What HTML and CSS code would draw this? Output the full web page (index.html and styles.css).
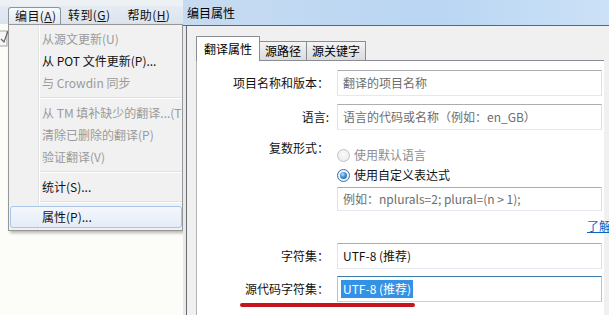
FILE: index.html
```html
<!DOCTYPE html>
<html lang="zh-CN">
<head>
<meta charset="utf-8">
<title>编目属性</title>
<link rel="stylesheet" href="styles.css">
</head>
<body>
<div class="screen">
  <div class="app">
    <div class="topstrip"></div>
    <div class="menubar">
      <span class="mb-item open">编目(<u>A</u>)</span>
      <span class="mb-item">转到(<u>G</u>)</span>
      <span class="mb-item">帮助(<u>H</u>)</span>
    </div>
    <div class="app-body">
      <div class="edge">
        <svg width="8" height="24" viewBox="0 0 8 24"><rect x="-6" y="6" width="13" height="15" fill="#f6f6f6" stroke="#a5a5a5"/><path d="M1 14 L4 17 L8 6" fill="none" stroke="#666" stroke-width="1.2"/></svg>
      </div>
      <div class="dropdown">
        <div class="mi dis">从源文更新(U)</div>
        <div class="mi">从 POT 文件更新(P)...</div>
        <div class="mi dis">与 Crowdin 同步</div>
        <div class="sep"></div>
        <div class="mi dis">从 TM 填补缺少的翻译...(T)</div>
        <div class="mi dis">清除已删除的翻译(P)</div>
        <div class="mi dis">验证翻译(V)</div>
        <div class="sep"></div>
        <div class="mi">统计(S)...</div>
        <div class="sep"></div>
        <div class="mi hot">属性(P)...</div>
      </div>
    </div>
  </div>
  <div class="dialog">
    <div class="titlebar">编目属性</div>
    <div class="dlg-body">
      <div class="tabs">
        <div class="tab active">翻译属性</div>
        <div class="tab">源路径</div>
        <div class="tab">源关键字</div>
      </div>
      <div class="panel">
        <div class="row">
          <span class="lbl">项目名称和版本：</span>
          <div class="field"><span class="ph">翻译的项目名称</span></div>
        </div>
        <div class="row gap8">
          <span class="lbl">语言:</span>
          <div class="field"><span class="ph">语言的代码或名称（例如：en_GB）</span></div>
        </div>
        <div class="row plural">
          <span class="lbl">复数形式：</span>
          <div class="opts">
            <div class="opt dis"><span class="radio"></span>使用默认语言</div>
            <div class="opt"><span class="radio on"><span class="dot"></span></span>使用自定义表达式</div>
            <div class="field sm"><span class="ph">例如：nplurals=2; plural=(n &gt; 1);</span></div>
          </div>
        </div>
        <div class="linkrow"><a class="link" href="#">了解更多</a></div>
        <div class="row gap9">
          <span class="lbl">字符集：</span>
          <div class="field sel-field">UTF-8 (推荐)</div>
        </div>
        <div class="row gap7">
          <span class="lbl">源代码字符集：</span>
          <div class="field sel-field focus"><span class="sel">UTF-8 (推荐)</span></div>
        </div>
        <div class="redline"></div>
      </div>
    </div>
  </div>
</div>
</body>
</html>
```

FILE: styles.css
```css
* { box-sizing: border-box; margin: 0; padding: 0; }
html, body { width: 609px; height: 315px; overflow: hidden; }
body {
  font-family: "Noto Sans CJK SC", "Noto Sans", sans-serif;
  font-size: 12px;
  line-height: 16px;
  color: #000;
  background: #fff;
}
.screen { display: flex; width: 609px; height: 315px; overflow: hidden; }

/* ---------- left application window with open menu ---------- */
.app { width: 183px; flex: none; display: flex; flex-direction: column; background: #fcfcf8; }
.topstrip { height: 6px; background: #eef1f4; }
.menubar {
  height: 18px;
  display: flex;
  align-items: flex-end;
  padding-left: 8px;
  background: linear-gradient(#e5ebf3, #dbe4ee);
}
.mb-item {
  height: 17px;
  line-height: 16px;
  padding: 0 10px 0 7px;
  white-space: nowrap;
  color: #111;
  letter-spacing: 0.4px;
}
.mb-item u { text-decoration: underline; text-underline-offset: 1px; }
.mb-item.open {
  width: 53px;
  padding: 0 0 0 6px;
  border: 1px solid #8d959e;
  border-bottom: none;
  border-radius: 3px 3px 0 0;
  background: linear-gradient(#f7f9fb, #e3e8ee);
}
.app-body { flex: 1; display: flex; align-items: flex-start; }
.edge { width: 8px; flex: none; padding-top: 1px; overflow: hidden; }
.edge svg { display: block; }
.dropdown {
  width: 175px;
  flex: none;
  border: 1px solid #979797;
  padding: 3px 0 2px;
  overflow: hidden;
  background: linear-gradient(to right, #f1f1f1 0, #f1f1f1 29px, #e2e3e3 29px, #e2e3e3 30px, #fff 30px, #fff 31px, #f1f1f1 31px);
  box-shadow: 2px 2px 3px rgba(0, 0, 0, 0.28);
}
.mi {
  height: 22px;
  line-height: 22px;
  padding-left: 33px;
  white-space: nowrap;
  color: #111;
}
.mi.dis { color: #9a9a9a; }
.mi.hot {
  margin-left: 1px;
  padding-left: 31px;
  line-height: 20px;
  border: 1px solid #a9c6ea;
  border-radius: 3px;
  background: linear-gradient(#f4f7fc, #e4ecf8);
}
.sep {
  height: 1px;
  margin: 3px 0 4px 31px;
  background: #e0e0e0;
  box-shadow: 0 1px 0 #fff;
}

/* ---------- dialog ---------- */
.dialog { flex: 1; min-width: 0; display: flex; flex-direction: column; background: #e5eaf0; }
.titlebar {
  height: 26px;
  line-height: 25px;
  padding-left: 4px;
  border-bottom: 1px solid #4f6a86;
  background: linear-gradient(to right, #c6dbf1, #bad6f3 60%, #cbe1f7);
  color: #000;
  white-space: nowrap;
}
.dlg-body {
  flex: 1;
  margin-left: 3px;
  border-left: 1px solid #6b6b6b;
  background: #f0f0f0;
  padding: 10px 5px 0 9px;
  display: flex;
  flex-direction: column;
  min-height: 0;
}
.tabs { height: 24px; flex: none; display: flex; align-items: flex-end; }
.tab {
  height: 19px;
  line-height: 18px;
  padding: 0 5px;
  border: 1px solid #898c95;
  border-left: none;
  border-bottom: none;
  background: linear-gradient(#f4f4f4, #e6e6e6 50%, #dcdcdc);
  white-space: nowrap;
}
.tab.active {
  height: 25px;
  line-height: 24px;
  margin-bottom: -1px;
  padding: 0 7px;
  border-left: 1px solid #898c95;
  background: #fff;
  position: relative;
  z-index: 1;
}
.panel {
  flex: 1;
  background: #fff;
  border-top: 1px solid #898c95;
  border-left: 1px solid #b4b4b4;
  padding: 9px 2px 0 0;
  display: flex;
  flex-direction: column;
}
.row { display: flex; align-items: center; gap: 8px; }
.row.gap8 { margin-top: 8px; }
.row.gap9 { margin-top: 9px; }
.row.gap7 { margin-top: 7px; }
.lbl { width: 132px; flex: none; text-align: right; white-space: nowrap; color: #111; }
.field {
  flex: 1;
  height: 26px;
  display: flex;
  align-items: center;
  padding-left: 5px;
  border: 1px solid;
  border-color: #abadb3 #dbdfe6 #e3e9ef #e2e3ea;
  background: #fff;
  white-space: nowrap;
  overflow: hidden;
  color: #111;
}
.ph { color: #6d6d6d; }
.row.plural { margin-top: 9px; align-items: flex-start; }
.plural .lbl { line-height: 18px; }
.opts { flex: 1; padding-top: 6px; display: flex; flex-direction: column; min-width: 0; }
.opt { height: 20px; display: flex; align-items: center; gap: 4px; white-space: nowrap; color: #111; }
.opt.dis { color: #8e8e8e; }
.radio {
  width: 13px;
  height: 13px;
  flex: none;
  border-radius: 50%;
  border: 1px solid #c2c2c2;
  background: radial-gradient(circle at 50% 40%, #fafafa, #e8e8e8);
  display: flex;
  align-items: center;
  justify-content: center;
}
.radio.on {
  border-color: #3c6e97;
  background: radial-gradient(circle at 50% 40%, #ffffff, #dfe9f2);
}
.dot {
  width: 7px;
  height: 7px;
  border-radius: 50%;
  background: radial-gradient(circle at 40% 35%, #bfe2ff 0, #3f8ed0 45%, #145a98 100%);
}
.field.sm { flex: none; height: 24px; margin-top: 2px; }
.linkrow { margin-top: 7px; height: 16px; padding-left: 390px; white-space: nowrap; }
.link { color: #0b63c4; text-decoration: underline; }
.sel-field { padding-left: 5px; }
.field.focus {
  padding-left: 3px;
  border-color: #3d7bad #a4c9e3 #b7d9ed #a4c9e3;
}
.field.focus .sel { flex: none; }
.sel { display: inline-block; line-height: 18px; padding: 0 2px; background: #3492e4; color: #fff; }
.redline {
  margin: 1px 0 0 43px;
  width: 175px;
  height: 4px;
  flex: none;
  border-radius: 2px;
  background: #c5161d;
}
```
